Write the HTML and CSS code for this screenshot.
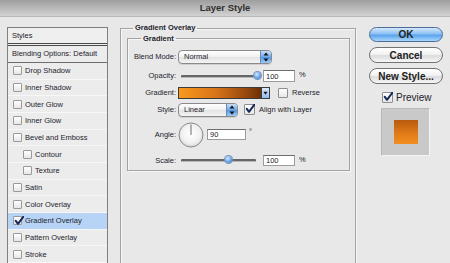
FILE: index.html
```html
<!DOCTYPE html>
<html lang="en">
<head>
    <meta charset="UTF-8">
    <title>Layer Style</title>
    <link rel="stylesheet" href="styles.css">
</head>
<body>
    <div class="titlebar">Layer Style</div>
    <div class="main">
        <div class="styles-panel">
            <div class="panel-head">Styles</div>
            <div class="panel-blend">Blending Options: Default</div>
            <div class="style-item"><span class="box"></span>Drop Shadow</div>
            <div class="style-item"><span class="box"></span>Inner Shadow</div>
            <div class="style-item"><span class="box"></span>Outer Glow</div>
            <div class="style-item"><span class="box"></span>Inner Glow</div>
            <div class="style-item"><span class="box"></span>Bevel and Emboss</div>
            <div class="style-item sub"><span class="box"></span>Contour</div>
            <div class="style-item sub"><span class="box"></span>Texture</div>
            <div class="style-item"><span class="box"></span>Satin</div>
            <div class="style-item"><span class="box"></span>Color Overlay</div>
            <div class="style-item selected">
                <span class="box"><svg class="tick" viewBox="0 0 10 10"><path d="M1.8 4.8 L4 7.8 L9.5 0.5"/></svg></span>Gradient Overlay
            </div>
            <div class="style-item"><span class="box"></span>Pattern Overlay</div>
            <div class="style-item"><span class="box"></span>Stroke</div>
        </div>

        <fieldset class="group outer">
            <legend>Gradient Overlay</legend>
            <fieldset class="group inner">
                <legend>Gradient</legend>

                <div class="row row-blend">
                    <span class="label">Blend Mode:</span>
                    <div class="select wide">
                        <span>Normal</span>
                        <span class="stepper"><svg viewBox="0 0 8 12"><path d="M4 1.5 L6.5 4.5 H1.5 Z M4 10.5 L6.5 7.5 H1.5 Z"/></svg></span>
                    </div>
                </div>

                <div class="row row-opacity">
                    <span class="label">Opacity:</span>
                    <div class="slider"><span class="track"></span><span class="thumb" style="left: 74px"></span></div>
                    <span class="field num">100</span>
                    <span class="unit">%</span>
                </div>

                <div class="row row-gradient">
                    <span class="label">Gradient:</span>
                    <div class="grad-bar"></div>
                    <span class="grad-drop"><svg viewBox="0 0 8 12"><path d="M1.5 4.5 H6.5 L4 8 Z"/></svg></span>
                    <span class="box check-reverse"></span>
                    <span class="check-text">Reverse</span>
                </div>

                <div class="row row-style">
                    <span class="label">Style:</span>
                    <div class="select narrow">
                        <span>Linear</span>
                        <span class="stepper"><svg viewBox="0 0 8 12"><path d="M4 1.5 L6.5 4.5 H1.5 Z M4 10.5 L6.5 7.5 H1.5 Z"/></svg></span>
                    </div>
                    <span class="box big check-align"><svg class="tick" viewBox="0 0 10 10"><path d="M1.8 4.8 L4 7.8 L9.5 0.5"/></svg></span>
                    <span class="check-text">Align with Layer</span>
                </div>

                <div class="row row-angle">
                    <span class="label">Angle:</span>
                    <svg class="dial" viewBox="0 0 26 26">
                        <defs>
                            <radialGradient id="dialFill" cx="50%" cy="45%" r="55%">
                                <stop offset="0" stop-color="#ffffff"/>
                                <stop offset="0.7" stop-color="#f1f1f1"/>
                                <stop offset="1" stop-color="#d4d4d4"/>
                            </radialGradient>
                        </defs>
                        <circle cx="13" cy="13" r="12" fill="url(#dialFill)" stroke="#8c8c8c" stroke-width="1"/>
                        <line x1="13" y1="13" x2="13" y2="2.5" stroke="#6a6a6a" stroke-width="1"/>
                    </svg>
                    <span class="field angle-field">90</span>
                    <span class="degree">°</span>
                </div>

                <div class="row row-scale">
                    <span class="label">Scale:</span>
                    <div class="slider"><span class="track"></span><span class="thumb" style="left: 45px"></span></div>
                    <span class="field num">100</span>
                    <span class="unit">%</span>
                </div>
            </fieldset>
        </fieldset>

        <div class="actions">
            <button class="btn btn-ok">OK</button>
            <button class="btn">Cancel</button>
            <button class="btn">New Style...</button>
            <div class="preview-check">
                <span class="box big"><svg class="tick" viewBox="0 0 10 10"><path d="M1.8 4.8 L4 7.8 L9.5 0.5"/></svg></span>
                <span>Preview</span>
            </div>
            <div class="preview-box"><div class="swatch"></div></div>
        </div>
    </div>
</body>
</html>
```

FILE: styles.css
```css
body {
    margin: 0;
    width: 450px;
    height: 263px;
    overflow: hidden;
    background-color: #e8e8e8;
    font-family: "Liberation Sans", Arial, sans-serif;
    font-size: 7.5px;
    color: #23232c;
}

.titlebar {
    height: 16px;
    line-height: 16px;
    text-align: center;
    font-size: 9.5px;
    font-weight: bold;
    color: #2f2f2f;
    background: linear-gradient(#9e9e9e, #d2d2d2);
    border-bottom: 1px solid #b8b8b8;
}

.main {
    display: flex;
    align-items: flex-start;
    padding: 6px 0 0 7px;
    height: 246px;
    box-sizing: border-box;
}

/* left list of styles */
.styles-panel {
    flex-shrink: 0;
    width: 101px;
    height: 240px;
    margin-top: 4px;
    box-sizing: border-box;
    border: 1px solid #7f7f7f;
    background-color: #ececec;
    overflow: hidden;
}

.panel-head {
    height: 15px;
    line-height: 15px;
    padding-left: 4px;
    background-color: #efefef;
    border-bottom: 3px double #4a4a4a;
}

.panel-blend {
    height: 16px;
    line-height: 16px;
    padding-left: 4px;
    border-bottom: 1px solid #6e6e6e;
}

.style-item {
    display: flex;
    align-items: center;
    height: 15.67px;
    border-bottom: 1px solid #f7f7f7;
}

.style-item .box {
    width: 7px;
    height: 7px;
    margin-left: 5px;
    margin-right: 3px;
    border-color: #9a9a9a;
}

.style-item.sub .box {
    margin-left: 15px;
}

.style-item.selected {
    background-color: #b7d3f6;
}

.box {
    position: relative;
    flex-shrink: 0;
    width: 8px;
    height: 8px;
    border: 1px solid #8e8e8e;
    border-radius: 1px;
    background: linear-gradient(#ffffff, #e6e6e6);
}

.box.big {
    width: 9px;
    height: 9px;
}

.tick {
    position: absolute;
    left: 0;
    top: -1px;
    width: 10px;
    height: 10px;
}

.tick path {
    fill: none;
    stroke: #17285a;
    stroke-width: 2;
    stroke-linecap: round;
    stroke-linejoin: round;
}

/* group boxes */
.group {
    margin: 0;
    border: 1px solid #a2a2a2;
    box-shadow: inset 1px 1px 0 #f7f7f7, 1px 1px 0 #f7f7f7;
    min-inline-size: 0;
}

.group legend {
    padding: 0 2px;
    font-weight: bold;
}

.outer {
    flex-shrink: 0;
    width: 236px;
    height: 250px;
    margin-left: 12px;
    padding: 1px 5px 0 6px;
    box-sizing: border-box;
}

.outer > legend {
    margin-left: 6px;
    line-height: 10px;
}

.inner {
    padding: 6.5px 0 4.5px 0;
}

.inner > legend {
    margin-left: 13px;
    line-height: 9px;
}

/* form rows */
.row {
    display: flex;
    align-items: center;
}

.label {
    width: 48px;
    margin-right: 2px;
    text-align: right;
    flex-shrink: 0;
}

.row-blend { height: 14px; margin-bottom: 6px; }
.row-opacity { height: 12px; margin-bottom: 5px; }
.row-gradient { height: 12px; margin-bottom: 4px; }
.row-style { height: 14px; margin-bottom: 5px; }
.row-angle { height: 26px; margin-bottom: 7px; }
.row-scale { height: 11px; }

.select {
    display: flex;
    align-items: center;
    justify-content: space-between;
    height: 14px;
    box-sizing: border-box;
    border: 1px solid #8a8a8a;
    border-radius: 4px;
    padding-left: 5px;
    background: linear-gradient(#ffffff, #f0f0f0 50%, #e2e2e2 51%, #f4f4f4);
    box-shadow: 0 1px 0 #cfcfcf;
    overflow: hidden;
}

.select.wide { width: 94px; }
.select.narrow { width: 60px; }

.stepper {
    width: 10px;
    height: 100%;
    background: linear-gradient(#c6def8, #6ea8ec 50%, #4f95e6 51%, #9ccaf6);
    border-left: 1px solid #6c87b0;
}

.stepper svg,
.grad-drop svg {
    display: block;
    width: 100%;
    height: 100%;
    fill: #111;
}

.slider {
    position: relative;
    width: 78px;
    height: 10px;
    margin-left: 2px;
}

.track {
    position: absolute;
    left: 1px;
    right: 2px;
    top: 4px;
    height: 2px;
    background-color: #666;
    border-bottom: 1px solid #b8b8b8;
    border-radius: 1px;
}

.thumb {
    position: absolute;
    top: 1px;
    width: 7px;
    height: 7px;
    border-radius: 50%;
    background: radial-gradient(circle at 40% 35%, #d6ebff, #5d9ce6 60%, #3b74c4);
    box-shadow: 0 0 0 1px #7a93b8;
}

.field {
    height: 12px;
    line-height: 12px;
    box-sizing: border-box;
    padding-left: 2px;
    background-color: #ffffff;
    border: 1px solid #9c9c9c;
    border-top-color: #6d6d6d;
}

.field.num {
    width: 32px;
    margin-left: 5px;
}

.row-scale .field {
    height: 11px;
    line-height: 10px;
}

.unit {
    margin-left: 4px;
    align-self: flex-start;
}

.grad-bar {
    width: 84px;
    height: 12px;
    box-sizing: border-box;
    border: 1px solid #3b3b3b;
    background: linear-gradient(90deg, #f99a1d, #d8741a 45%, #9a4a0d 80%, #6c3006);
}

.grad-drop {
    width: 8px;
    height: 12px;
    box-sizing: border-box;
    border: 1px solid #3b3b3b;
    border-left: none;
    background: linear-gradient(#d9e9fb, #8dbcf0);
}

.check-reverse {
    margin-left: 8px;
}

.check-align {
    margin-left: 6px;
}

.check-text {
    margin-left: 4px;
}

.dial {
    width: 26px;
    height: 26px;
}

.angle-field {
    width: 39px;
    height: 11px;
    line-height: 10px;
    margin-left: 3px;
}

.degree {
    align-self: flex-start;
    margin-left: 3px;
    margin-top: 5px;
}

/* right column */
.actions {
    flex-shrink: 0;
    display: flex;
    flex-direction: column;
    width: 74px;
    margin: 4px 0 0 13px;
}

.btn {
    height: 16px;
    margin: 0 0 5px 0;
    padding: 0;
    border: 1px solid #727272;
    border-radius: 8px;
    font-family: "Liberation Sans", Arial, sans-serif;
    font-size: 10px;
    font-weight: bold;
    color: #222;
    background: linear-gradient(#ffffff, #f2f2f2 45%, #dcdcdc 55%, #f7f7f7);
}

.btn-ok {
    height: 15px;
    border-color: #4f6b98;
    background: linear-gradient(#d4e8fc, #8cc1f3 45%, #5aa3ec 55%, #a9d6fb);
}

.preview-check {
    display: flex;
    align-items: center;
    margin: 3px 0 0 13px;
    height: 10px;
    font-size: 10px;
}

.preview-check .box {
    margin-right: 3px;
}

.preview-box {
    display: flex;
    align-items: center;
    justify-content: center;
    width: 49px;
    height: 48px;
    margin: 6px 0 0 12px;
    box-sizing: border-box;
    background-color: #c9c9c9;
    border: 1px solid #b9b9b9;
    border-right-color: #f4f4f4;
    border-bottom-color: #f4f4f4;
}

.swatch {
    width: 24px;
    height: 24px;
    background: linear-gradient(#b75a0f, #e07a17 55%, #f28e21);
}
```
